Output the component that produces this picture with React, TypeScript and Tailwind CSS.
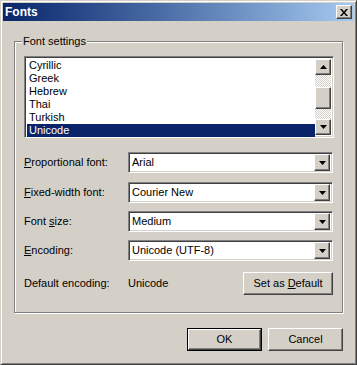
import React from "react";

const raised =
  "border border-t-white border-l-white border-r-[#404040] border-b-[#404040] shadow-[inset_-1px_-1px_0_#808080] bg-[#d4d0c8]";
const sunken =
  "border border-t-[#808080] border-l-[#808080] border-r-white border-b-white shadow-[inset_1px_1px_0_#404040,inset_-1px_-1px_0_#d4d0c8]";

const Arrow = ({ up = false }: { up?: boolean }) => (
  <svg width="7" height="4" viewBox="0 0 7 4" className={up ? "rotate-180" : ""}>
    <path d="M0 0h7L3.5 4z" fill="#000" />
  </svg>
);

const SmallBtn = ({ up = false, h = 16 }: { up?: boolean; h?: number }) => (
  <div className={`${raised} w-[16px] flex items-center justify-center shrink-0`} style={{ height: h }}>
    <Arrow up={up} />
  </div>
);

const Combo = ({ value }: { value: string }) => (
  <div className={`${sunken} bg-white w-[205px] h-[21px] p-[2px] flex items-center`}>
    <span className="flex-1 pl-[1px] truncate">{value}</span>
    <SmallBtn h={17} />
  </div>
);

const Row = ({ label, value, className = "" }: { label: React.ReactNode; value: string; className?: string }) => (
  <div className={`flex items-center ${className}`}>
    <div className="w-[104px]">{label}</div>
    <Combo value={value} />
  </div>
);

const items = ["Cyrillic", "Greek", "Hebrew", "Thai", "Turkish", "Unicode"];

export default function App() {
  return (
    <div
      className="w-[357px] h-[365px] bg-[#d4d0c8] border border-t-[#d4d0c8] border-l-[#d4d0c8] border-r-[#404040] border-b-[#404040] shadow-[inset_1px_1px_0_#fff,inset_-1px_-1px_0_#808080] p-[2px] text-[11px] text-black flex flex-col"
      style={{ fontFamily: '"Liberation Sans", Arial, sans-serif' }}
    >
      {/* title bar */}
      <div className="h-[18px] bg-gradient-to-r from-[#0a246a] to-[#a6caf0] flex items-center pl-[2px] pr-[2px]">
        <span className="text-white font-bold text-[12px] flex-1">Fonts</span>
        <div className={`${raised} w-[16px] h-[14px] flex items-center justify-center`}>
          <svg width="8" height="7" viewBox="0 0 8 7">
            <path d="M0 0h2l2 2.5L6 0h2L5 3.5 8 7H6L4 4.5 2 7H0l3-3.5z" fill="#000" />
          </svg>
        </div>
      </div>

      {/* group box */}
      <div className="relative mt-[20px] ml-[11px] w-[329px] h-[272px] border border-[#808080] shadow-[1px_1px_0_#fff,inset_1px_1px_0_#fff] pt-[14px] pl-[9px]">
        <span className="absolute -top-[8px] left-[7px] px-[1px] bg-[#d4d0c8] leading-[14px]">Font settings</span>

        {/* list box */}
        <div className={`${sunken} bg-white w-[310px] h-[82px] p-[2px] flex`}>
          <div className="flex-1 flex flex-col">
            {items.map((it) => (
              <div
                key={it}
                className={`h-[13px] leading-[13px] pl-[2px] ${it === "Unicode" ? "bg-[#0a246a] text-white" : ""}`}
              >
                {it}
              </div>
            ))}
          </div>
          <div className="w-[16px] flex flex-col">
            <SmallBtn up />
            <div className="flex-1 bg-[repeating-conic-gradient(#fff_0_25%,#d4d0c8_0_50%)] bg-[length:2px_2px] pt-[12px]">
              <div className={`${raised} h-[22px]`} />
            </div>
            <SmallBtn />
          </div>
        </div>

        <div className="mt-[14px] flex flex-col">
          <Row label={<><u>P</u>roportional font:</>} value="Arial" />
          <Row className="mt-[9px]" label={<><u>F</u>ixed-width font:</>} value="Courier New" />
          <Row className="mt-[8px]" label={<>Font <u>s</u>ize:</>} value="Medium" />
          <Row className="mt-[8px]" label={<><u>E</u>ncoding:</>} value="Unicode (UTF-8)" />
        </div>

        <div className="mt-[11px] w-[309px] flex items-center">
          <div className="w-[104px]">Default encoding:</div>
          <div className="flex-1">Unicode</div>
          <div className={`${raised} w-[90px] h-[23px] flex items-center justify-center`}>
            Set as <u className="ml-[3px]">D</u>efault
          </div>
        </div>
      </div>

      {/* buttons */}
      <div className="mt-[15px] flex justify-end gap-[6px] pr-[11px]">
        <div className="w-[75px] h-[23px] border border-black">
          <div className={`${raised} w-full h-full flex items-center justify-center`}>OK</div>
        </div>
        <div className={`${raised} w-[75px] h-[23px] flex items-center justify-center`}>Cancel</div>
      </div>
    </div>
  );
}
